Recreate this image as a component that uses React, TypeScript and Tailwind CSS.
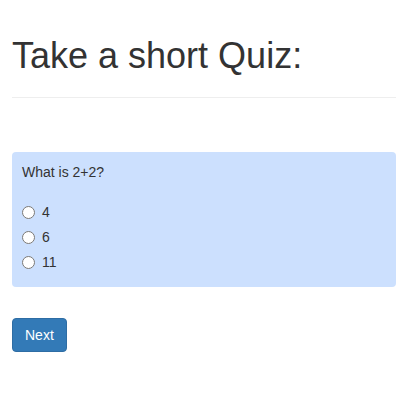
import { useState } from "react";

const options = ["4", "6", "11"];

function App() {
  const [answer, setAnswer] = useState<string>("");
  return (
    <div
      className="min-h-screen bg-white pl-[12px] pr-[15px] text-[#333] text-[14px] leading-[20px]"
      style={{ fontFamily: '"Liberation Sans", Arial, sans-serif' }}
    >
      <h1 className="pt-[36px] text-[36px] leading-[40px] font-normal">
        Take a short Quiz:
      </h1>
      <div className="mt-[21px] border-b border-[#eee]" />

      <div className="mt-[54px] rounded-[4px] bg-[#cce0fe] px-[10px] py-[10px]">
        <p className="mb-[20px]">What is 2+2?</p>
        {options.map((opt) => (
          <label key={opt} className="mb-[5px] flex h-[20px] items-center">
            <input
              type="radio"
              name="q1"
              value={opt}
              checked={answer === opt}
              onChange={() => setAnswer(opt)}
              className="m-0 h-[13px] w-[13px]"
            />
            <span className="ml-[7px]">{opt}</span>
          </label>
        ))}
      </div>

      <button className="mt-[31px] h-[34px] rounded-[4px] border border-[#2e6da4] bg-[#337ab7] px-[12px] text-white">
        Next
      </button>
    </div>
  );
}

export default App;
